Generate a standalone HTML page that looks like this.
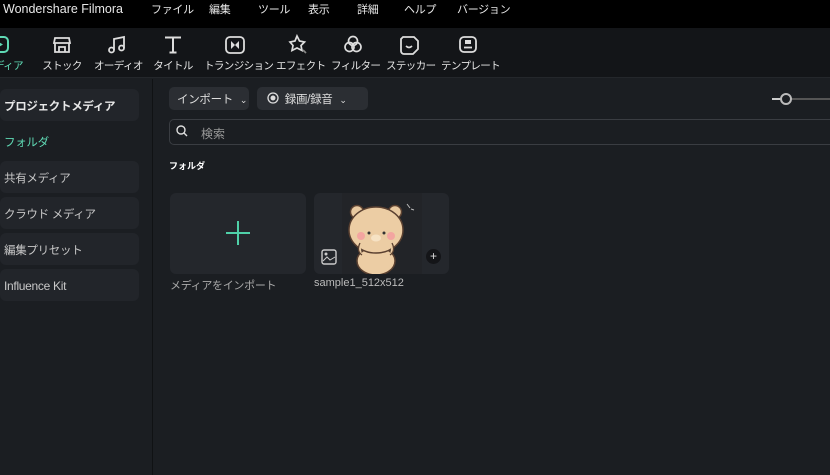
<!DOCTYPE html><html><head><meta charset="utf-8"><style>
*{margin:0;padding:0;box-sizing:border-box}
body{width:830px;height:475px;overflow:hidden;background:#1b1e22;font-family:"Liberation Sans","Noto Sans CJK JP",sans-serif;color:#ddd;position:relative}
.a{position:absolute;white-space:nowrap}
#title{left:0;top:0;width:830px;height:28px;background:#000;font-size:11px;color:#e8e8e8}
#title span{position:absolute;top:1px;letter-spacing:-0.3px}
#tb{left:0;top:28px;width:830px;height:50px;background:#131518;border-bottom:1px solid #24272b}
.ti{position:absolute;top:6px;font-size:10.5px;letter-spacing:-0.6px;color:#e6e6e6;text-align:center;white-space:nowrap}
.ti svg{display:block;margin:0 auto 2px}
#side{left:0;top:79px;width:153px;height:396px;background:#1b1e22;border-right:1px solid #101214}
.si{position:absolute;left:0;width:139px;height:32px;background:#22252a;border-radius:6px;font-size:11.5px;letter-spacing:-0.3px;color:#c8c8c8;padding:9px 0 0 4px;white-space:nowrap}
.btn{position:absolute;height:23px;background:#2b2e33;border-radius:5px;font-size:11.5px;letter-spacing:-0.3px;color:#ddd;padding:4px 0 0 8px;white-space:nowrap}
</style></head><body>
<div id="title" class="a">
<span style="left:3px;top:2px;font-size:12.5px;letter-spacing:0">Wondershare Filmora</span>
<span style="left:151px">ファイル</span><span style="left:209px">編集</span><span style="left:258px">ツール</span><span style="left:308px">表示</span><span style="left:357px">詳細</span><span style="left:404px">ヘルプ</span><span style="left:457px">バージョン</span>
</div>
<div id="tb" class="a">
<div class="ti" style="left:-6px;width:30px;color:#5fd9b4;text-align:left;padding-left:0"><svg width="22" height="22" viewBox="0 0 22 22" style="margin:0 0 2px -4px"><rect x="2" y="3" width="16" height="15" rx="4" fill="none" stroke="#5fd9b4" stroke-width="2"/><path d="M8 7.5l5 3-5 3z" fill="#5fd9b4"/></svg>ディア</div>
<div class="ti" style="left:42px;width:40px"><svg width="22" height="22" viewBox="0 0 22 22"><path d="M4 4h14l1 5H3zM4 9v9h14V9M8 18v-5h6v5" fill="none" stroke="#ddd" stroke-width="1.8"/></svg>ストック</div>
<div class="ti" style="left:94px;width:46px"><svg width="22" height="22" viewBox="0 0 22 22"><path d="M8 16V5l10-2v11" fill="none" stroke="#ddd" stroke-width="1.8"/><circle cx="5.5" cy="16" r="2.5" fill="none" stroke="#ddd" stroke-width="1.8"/><circle cx="15.5" cy="14" r="2.5" fill="none" stroke="#ddd" stroke-width="1.8"/></svg>オーディオ</div>
<div class="ti" style="left:153px;width:40px"><svg width="22" height="22" viewBox="0 0 22 22"><path d="M3 3.5h16M11 3.5v15M7.5 18.5h7" fill="none" stroke="#ddd" stroke-width="2"/></svg>タイトル</div>
<div class="ti" style="left:204px;width:62px"><svg width="22" height="22" viewBox="0 0 22 22"><rect x="2" y="3" width="18" height="16" rx="4" fill="none" stroke="#ddd" stroke-width="1.8"/><path d="M7 7l4 4-4 4zM15 7l-4 4 4 4z" fill="#ddd"/></svg>トランジション</div>
<div class="ti" style="left:276px;width:44px"><svg width="22" height="22" viewBox="0 0 22 22"><path d="M10 2l2.5 5 5 1-3.5 3.5 1 5-5-2.5-5 2.5 1-5L3 8l5-1z" fill="none" stroke="#ddd" stroke-width="1.7"/><path d="M16 16l3 3" stroke="#888" stroke-width="1.7"/></svg>エフェクト</div>
<div class="ti" style="left:331px;width:44px"><svg width="22" height="22" viewBox="0 0 22 22"><circle cx="11" cy="7" r="4.5" fill="none" stroke="#ddd" stroke-width="1.7"/><circle cx="7.5" cy="13" r="4.5" fill="none" stroke="#ddd" stroke-width="1.7"/><circle cx="14.5" cy="13" r="4.5" fill="none" stroke="#ddd" stroke-width="1.7"/></svg>フィルター</div>
<div class="ti" style="left:386px;width:46px"><svg width="22" height="22" viewBox="0 0 22 22"><path d="M5 3h11l4 4v8l-5 5H6a3 3 0 01-3-3V5z" fill="none" stroke="#ddd" stroke-width="1.8"/><path d="M8 12q3 3 6 0" fill="none" stroke="#ddd" stroke-width="1.6"/></svg>ステッカー</div>
<div class="ti" style="left:441px;width:54px"><svg width="22" height="22" viewBox="0 0 22 22"><rect x="3" y="3" width="16" height="15" rx="4" fill="none" stroke="#ddd" stroke-width="1.8"/><path d="M7 13.5h8" stroke="#ddd" stroke-width="1.8"/><rect x="8" y="6" width="6" height="4" fill="#ddd"/></svg>テンプレート</div>
</div>
<div id="side" class="a">
<div class="si" style="top:10px;color:#e8e8e8;font-weight:bold">プロジェクトメディア</div>
<div class="si" style="top:46px;background:none;color:#5fd9b4">フォルダ</div>
<div class="si" style="top:82px">共有メディア</div>
<div class="si" style="top:118px">クラウド メディア</div>
<div class="si" style="top:154px">編集プリセット</div>
<div class="si" style="top:190px;padding-top:10px;font-size:12px">Influence Kit</div>
</div>
<div class="btn" style="left:169px;top:87px;width:80px">インポート <span style="font-size:9px;margin-left:4px">⌄</span></div>
<div class="btn" style="left:257px;top:87px;width:111px;padding-left:10px"><svg width="12" height="12" style="vertical-align:-1px"><circle cx="6" cy="6" r="5" fill="none" stroke="#ddd" stroke-width="1.3"/><circle cx="6" cy="6" r="2.5" fill="#ddd"/></svg>&nbsp; 録画/録音 <span style="font-size:9px;margin-left:4px">⌄</span></div>
<div class="a" style="left:772px;top:98px;width:10px;height:2px;background:#ccc"></div>
<div class="a" style="left:790px;top:98px;width:40px;height:2px;background:#555"></div>
<div class="a" style="left:780px;top:93px;width:12px;height:12px;border:2px solid #bbb;border-radius:50%"></div>
<div class="a" style="left:169px;top:119px;width:680px;height:26px;border:1px solid #3a3d42;border-radius:5px;font-size:12px;color:#999;padding:5px 0 0 31px">検索</div>
<svg class="a" style="left:176px;top:125px" width="12" height="12"><circle cx="5" cy="5" r="4" fill="none" stroke="#ddd" stroke-width="1.4"/><path d="M8 8l3 3" stroke="#ddd" stroke-width="1.4"/></svg>
<div class="a" style="left:169px;top:159px;font-size:9px;color:#fff;font-weight:bold">フォルダ</div>
<div class="a" style="left:170px;top:193px;width:136px;height:81px;background:#24272c;border-radius:6px"></div>
<div class="a" style="left:226px;top:232px;width:24px;height:2px;background:#4fd0a8"></div>
<div class="a" style="left:237px;top:221px;width:2px;height:24px;background:#4fd0a8"></div>
<div class="a" style="left:170px;top:277px;font-size:11px;color:#aaa;letter-spacing:-0.3px">メディアをインポート</div>
<div class="a" style="left:314px;top:193px;width:135px;height:81px;background:#24272c;border-radius:6px;overflow:hidden">
<svg width="135" height="81"><rect x="28" y="0" width="80" height="81" fill="#222428"/>
<ellipse cx="62" cy="68" rx="19" ry="14" fill="#eccda4" stroke="#5a4030" stroke-width="1.5"/>
<circle cx="43" cy="19" r="6.5" fill="#e8c9a0" stroke="#5a4030" stroke-width="1.5"/><circle cx="81" cy="19" r="6.5" fill="#e8c9a0" stroke="#5a4030" stroke-width="1.5"/>
<ellipse cx="62" cy="37" rx="27" ry="23" fill="#eccda4" stroke="#5a4030" stroke-width="1.5"/>
<circle cx="47" cy="43" r="4" fill="#f3a5a0"/><circle cx="77" cy="43" r="4" fill="#f3a5a0"/>
<circle cx="55" cy="40" r="1.5" fill="#333"/><circle cx="70" cy="40" r="1.5" fill="#333"/>
<ellipse cx="62" cy="45" rx="5" ry="3.5" fill="#f6e2c4"/>
<path d="M46 50q-4 8 2 12M78 50q4 8-2 12" fill="#eccda4" stroke="#5a4030" stroke-width="1.3"/>
<path d="M93 11l3 4M97 16l3 1" stroke="#bbb"/></svg>
<svg class="a" style="left:7px;top:56px" width="16" height="16"><rect x="1" y="1" width="14" height="14" rx="2" fill="none" stroke="#ccc" stroke-width="1.4"/><path d="M2 12l4-4 3 3 5-3" fill="none" stroke="#ccc"/><circle cx="5" cy="5" r="1.5" fill="#ccc"/></svg>
<div class="a" style="left:112px;top:56px;width:15px;height:15px;border-radius:50%;background:#141518;color:#ddd;font-size:12px;text-align:center;line-height:14px">+</div>
</div>
<div class="a" style="left:314px;top:277px;font-size:11px;color:#bbb">sample1_512x512</div>
</body></html>
